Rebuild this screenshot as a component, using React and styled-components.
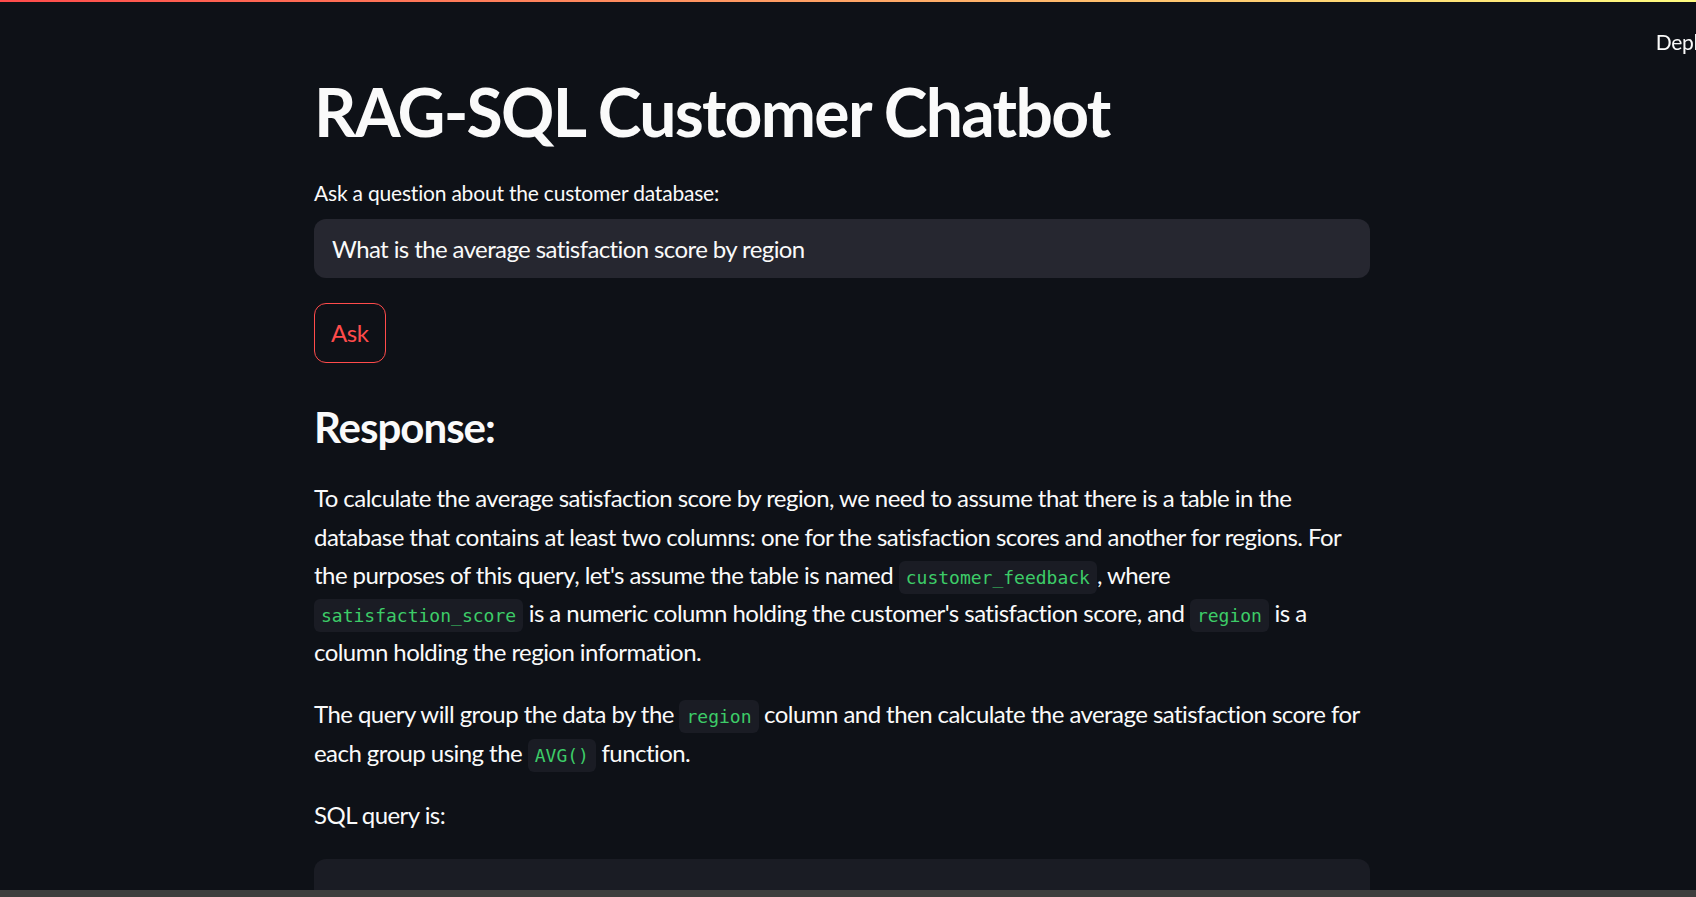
import React from 'react';
import styled, { createGlobalStyle } from 'styled-components';

const GlobalStyle = createGlobalStyle`
  html, body {
    margin: 0;
    padding: 0;
    height: 100%;
    overflow: hidden;
    background: #0e1117;
  }
  body {
    font-family: Lato, "Noto Sans", sans-serif;
    color: #fafafa;
  }
`;

const Shell = styled.div`
  height: 100vh;
  display: flex;
  flex-direction: column;
`;

const Decoration = styled.div`
  height: 2px;
  flex: none;
  background: linear-gradient(90deg, #ff4b4b, #fffd80);
`;

const Header = styled.header`
  position: fixed;
  top: 2px;
  left: 0;
  right: 0;
  height: 88px;
  display: flex;
  justify-content: flex-end;
  align-items: flex-start;
  padding-top: 27px;
  box-sizing: border-box;
`;

const DeployButton = styled.button`
  background: transparent;
  border: none;
  color: #fafafa;
  font-family: Lato, "Noto Sans", sans-serif;
  font-size: 21px;
  line-height: 1.2;
  letter-spacing: -0.3px;
  padding: 0;
  margin-right: -24px;
  cursor: pointer;
`;

const Scroller = styled.div`
  flex: 1;
  overflow: hidden;
`;

const Main = styled.main`
  width: 1056px;
  padding: 70px 0 0 314px;
`;

const Title = styled.h1`
  margin: 0;
  font-size: 66px;
  font-weight: 700;
  line-height: 1.2;
  letter-spacing: -1.7px;
`;

const Label = styled.label`
  display: block;
  margin: 25px 0 9px;
  font-size: 21px;
  line-height: 33.6px;
  letter-spacing: -0.2px;
`;

const TextInput = styled.input`
  display: block;
  width: 100%;
  height: 59px;
  box-sizing: border-box;
  border: none;
  border-radius: 12px;
  background: #262730;
  color: #fafafa;
  padding: 0 18px;
  font-family: Lato, "Noto Sans", sans-serif;
  font-size: 24px;
  letter-spacing: -0.6px;
  outline: none;
`;

const AskButton = styled.button`
  display: block;
  margin-top: 25px;
  height: 60px;
  padding: 0 16px;
  border: 1px solid #ff4b4b;
  border-radius: 12px;
  background: transparent;
  color: #ff4b4b;
  font-family: Lato, "Noto Sans", sans-serif;
  font-size: 24px;
  letter-spacing: -0.4px;
  cursor: pointer;
`;

const Heading = styled.h3`
  margin: 39px 0 27px;
  font-size: 42px;
  font-weight: 700;
  line-height: 1.2;
  letter-spacing: -1px;
`;

const Paragraph = styled.p`
  margin: 0 0 24px;
  font-size: 24px;
  line-height: 38.4px;
  letter-spacing: -0.55px;
  white-space: nowrap;
`;

const Code = styled.code`
  font-family: "DejaVu Sans Mono", "Liberation Mono", monospace;
  font-size: 18px;
  line-height: 1;
  letter-spacing: 0;
  color: #3dcc68;
  background: #1a1c24;
  border-radius: 6px;
  padding: 6px 7px;
`;

const CodeBlock = styled.pre`
  margin: 25px 0 0;
  height: 200px;
  border-radius: 12px;
  background: #1a1c24;
`;

const HScrollbar = styled.div`
  height: 7px;
  flex: none;
  background: #3e3e3e;
`;

export default function App() {
  return (
    <Shell>
      <GlobalStyle />
      <Decoration />
      <Header>
        <DeployButton>Deploy</DeployButton>
      </Header>
      <Scroller>
        <Main>
          <Title>RAG-SQL Customer Chatbot</Title>
          <Label htmlFor="q">Ask a question about the customer database:</Label>
          <TextInput id="q" defaultValue="What is the average satisfaction score by region" />
          <AskButton>Ask</AskButton>
          <Heading>Response:</Heading>
          <Paragraph>
            To calculate the average satisfaction score by region, we need to assume that there is a table in the
            <br />
            database that contains at least two columns: one for the satisfaction scores and another for regions. For
            <br />
            the purposes of this query, let's assume the table is named <Code>customer_feedback</Code>, where
            <br />
            <Code>satisfaction_score</Code> is a numeric column holding the customer's satisfaction score, and <Code>region</Code> is a
            <br />
            column holding the region information.
          </Paragraph>
          <Paragraph>
            The query will group the data by the <Code>region</Code> column and then calculate the average satisfaction score for
            <br />
            each group using the <Code>AVG()</Code> function.
          </Paragraph>
          <Paragraph>SQL query is:</Paragraph>
          <CodeBlock />
        </Main>
      </Scroller>
      <HScrollbar />
    </Shell>
  );
}
